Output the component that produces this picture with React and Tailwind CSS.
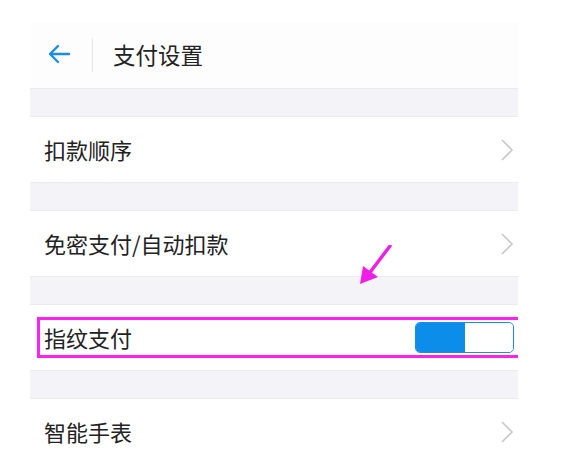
const font = { fontFamily: '"Noto Sans CJK SC", "Noto Sans", sans-serif' };

function Chevron() {
  return (
    <svg width="14" height="24" viewBox="0 0 14 24" className="shrink-0">
      <path d="M2 2 L12 12 L2 22" fill="none" stroke="#c8c8cd" strokeWidth="1.6" />
    </svg>
  );
}

function Gap() {
  return <div className="h-[29px] bg-[#f4f4f8] border-y border-[#ececef]" />;
}

function Row({ label, children }) {
  return (
    <div className="h-[65px] bg-white flex items-center justify-between pl-[14px] pr-[4px]">
      <span className="text-[22px] text-[#222]">{label}</span>
      {children || <Chevron />}
    </div>
  );
}

export default function App() {
  return (
    <div className="w-[564px] h-[459px] bg-white overflow-hidden pt-[22px]" style={font}>
      <div className="ml-[30px] w-[488px] relative">
        {/* header */}
        <div className="h-[66px] bg-[#fdfdfd] flex items-center">
          <svg width="24" height="20" viewBox="0 0 24 20" className="ml-[17px] mt-[-2px]">
            <path d="M22 10 H3 M11 2 L3 10 L11 18" fill="none" stroke="#1a8ee6" strokeWidth="2.4" strokeLinecap="round" strokeLinejoin="round" />
          </svg>
          <div className="ml-[21px] w-px h-[34px] bg-[#e6e6e6]" />
          <span className="ml-[20px] text-[22.5px] text-[#222]">支付设置</span>
        </div>
        <Gap />
        <Row label="扣款顺序" />
        <Gap />
        <Row label="免密支付/自动扣款" />
        <Gap />
        <div className="h-[65px] bg-white flex items-center">
          <div className="ml-[7px] w-[481px] h-[41px] border-[3px] border-[#ff22ee] border-r-0 flex items-center justify-between pl-[4px]">
            <span className="text-[22px] text-[#222]">指纹支付</span>
            <div className="flex w-[99px] h-[31px] rounded-[5px] border border-[#1a8ee6] overflow-hidden mr-[4px]">
              <div className="w-[49px] bg-[#0c8de9]" />
              <div className="flex-1 bg-white rounded-[4px]" />
            </div>
          </div>
        </div>
        <Gap />
        <Row label="智能手表" />
        {/* annotation arrow */}
        <svg width="40" height="44" viewBox="0 0 40 44" className="absolute left-[328px] top-[223px]">
          <path d="M32 1 L10 30" stroke="#f11ee8" strokeWidth="3.4" strokeLinecap="round" />
          <path d="M2 39 L5 21 L20 32 Z" fill="#f11ee8" />
        </svg>
      </div>
    </div>
  );
}
